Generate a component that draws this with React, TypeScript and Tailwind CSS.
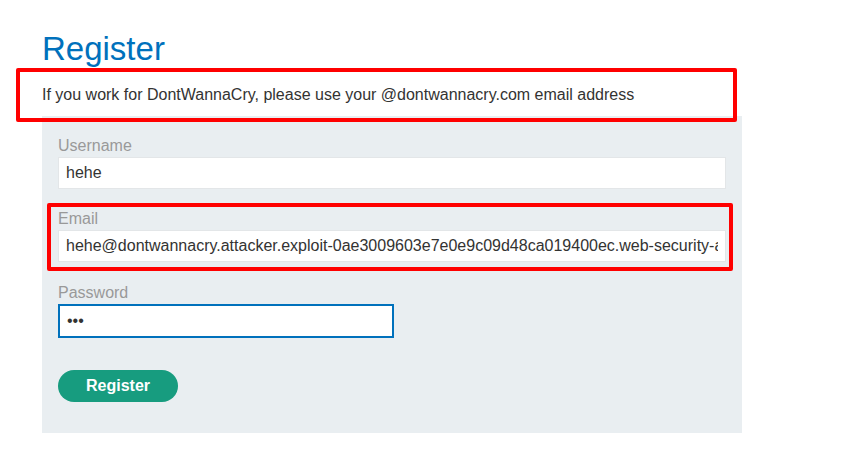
const EMAIL =
  "hehe@dontwannacry.attacker.exploit-0ae3009603e7e0e9c09d48ca019400ec.web-security-academy.net";

const Field = ({
  label,
  children,
}: {
  label: string;
  children: React.ReactNode;
}) => (
  <div className="flex flex-col">
    <label className="pt-[3px] text-[16px] leading-[22px] text-[#999999]">{label}</label>
    {children}
  </div>
);

export default function App() {
  return (
    <div className="min-h-screen bg-white font-['Liberation_Sans',Arial,sans-serif] text-[#333332]">
      <div className="pl-[42px] pt-[30px] w-[742px]">
        <h1 className="text-[33px] leading-[37px] text-[#0071bc]">Register</h1>

        <div className="relative mt-[17px] h-[32px]">
          <p className="text-[16px] leading-[22px]">
            If you work for DontWannaCry, please use your @dontwannacry.com email address
          </p>
          <span className="absolute -left-[26px] right-[5px] -top-[16px] bottom-[-6px] border-[4px] border-[#ff0000] rounded-[2px] pointer-events-none" />
        </div>

        <form className="bg-[#e9eef1] pt-[16px] px-4 pb-[31px] flex flex-col">
          <Field label="Username">
            <input
              readOnly
              value="hehe"
              className="h-[32px] w-full bg-white border border-[#e3e6e8] px-[7px] text-[16px] text-[#333332] outline-none"
            />
          </Field>

          <div className="relative mt-[16px]">
            <Field label="Email">
              <input
                readOnly
                value={EMAIL}
                className="h-[32px] w-full bg-white border border-[#e3e6e8] px-[7px] text-[16px] text-[#333332] outline-none"
              />
            </Field>
            <span className="absolute -left-[11px] -right-[7px] -top-[2px] -bottom-[9px] border-[4px] border-[#ff0000] rounded-[2px] pointer-events-none" />
          </div>

          <div className="mt-[17px]">
            <Field label="Password">
              <input
                type="password"
                readOnly
                value="abc"
                className="h-[34px] w-[336px] bg-white border-2 border-[#0071bc] px-[7px] text-[16px] text-[#333332] outline-none"
              />
            </Field>
          </div>

          <button
            type="button"
            className="mt-[32px] h-[32px] w-[120px] rounded-full bg-[#179c7f] text-white font-bold text-[16px]"
          >
            Register
          </button>
        </form>
      </div>
    </div>
  );
}
